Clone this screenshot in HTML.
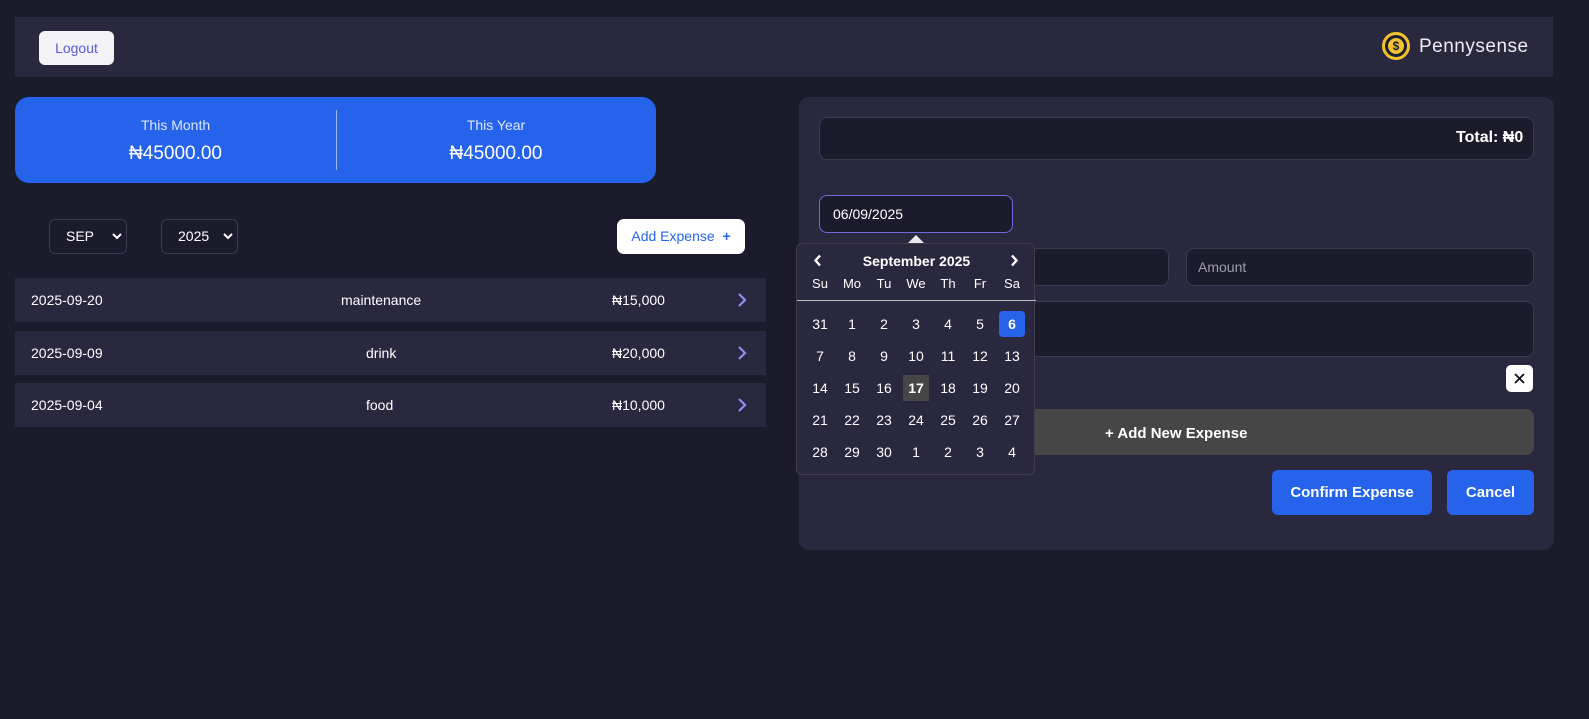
<!DOCTYPE html>
<html><head><meta charset="utf-8"><style>
*{box-sizing:border-box;margin:0;padding:0}
body{width:1589px;height:719px;background:#1c1b2c;font-family:"Liberation Sans",sans-serif;color:#fff;position:relative;overflow:hidden}
.a{position:absolute}
.hdr{left:15px;top:17px;width:1538px;height:60px;background:#2a283e}
.logout{left:39px;top:31px;width:75px;height:34px;background:#f3f3f6;border-radius:6px;color:#5b57d6;font-size:14px;text-align:center;line-height:34px}
.card{left:15px;top:97px;width:641px;height:86px;background:#2563eb;border-radius:14px}
.sel{height:35px;border:1px solid #3b3a50;border-radius:6px;font-size:14px;line-height:33px;padding-left:16px}
.row{left:15px;width:751px;height:44px;background:#2a283e;font-size:14px}
.row span{position:absolute;top:14px}
.row svg{position:absolute;left:722px;top:14px}
.panel{left:799px;top:97px;width:755px;height:453px;background:#2a283e;border-radius:10px}
.inp{background:#1c1b2c;border:1px solid #3b3a50;border-radius:8px}
.cal{left:796px;top:243px;width:239px;height:232px;background:#2a283e;border:1px solid #3f3e4a;border-radius:6px;font-size:14px}
.cal .d{position:absolute;width:26px;height:26px;text-align:center;line-height:26px;font-size:14px}
.btn{background:#2563eb;border-radius:6px;font-size:15px;font-weight:bold;text-align:center;line-height:45px}
</style></head><body>
<div class="a hdr"></div>
<div class="a logout">Logout</div>
<div class="a" style="left:1382px;top:32px;width:28px;height:28px;border-radius:50%;border:3px solid #f2c230;background:#1f1e2e"></div>
<div class="a" style="left:1388px;top:38px;width:16px;height:16px;border-radius:50%;background:#f2c230;color:#1f1e2e;font-size:12px;font-weight:bold;text-align:center;line-height:16px">$</div>
<div class="a" style="left:1419px;top:36px;font-size:19px;color:#ececf2;letter-spacing:.5px">Pennysense</div>

<div class="a card"></div>
<div class="a" style="left:336px;top:110px;width:1px;height:60px;background:#9bb6f5"></div>
<div class="a" style="left:15px;top:117px;width:321px;text-align:center;font-size:14px;color:#dde6fd">This Month</div>
<div class="a" style="left:15px;top:143px;width:321px;text-align:center;font-size:19px">₦45000.00</div>
<div class="a" style="left:336px;top:117px;width:320px;text-align:center;font-size:14px;color:#dde6fd">This Year</div>
<div class="a" style="left:336px;top:143px;width:320px;text-align:center;font-size:19px">₦45000.00</div>

<div class="a sel" style="left:49px;top:219px;width:78px">SEP</div>
<svg class="a" style="left:112px;top:233px" width="10" height="7" viewBox="0 0 10 7"><path d="M1 1l4 4 4-4" stroke="#fff" stroke-width="2" fill="none"/></svg>
<div class="a sel" style="left:161px;top:219px;width:77px">2025</div>
<svg class="a" style="left:223px;top:233px" width="10" height="7" viewBox="0 0 10 7"><path d="M1 1l4 4 4-4" stroke="#fff" stroke-width="2" fill="none"/></svg>
<div class="a" style="left:617px;top:219px;width:128px;height:35px;background:#fff;border-radius:7px;color:#2563eb;font-size:14px;line-height:35px;text-align:center">Add Expense&nbsp; <b>+</b></div>

<div class="a row" style="top:278px"><span style="left:16px">2025-09-20</span><span style="left:326px">maintenance</span><span style="left:597px">₦15,000</span><svg width="10" height="16" viewBox="0 0 10 16"><path d="M2 2l6 6-6 6" stroke="#8f8df0" stroke-width="2.2" fill="none"/></svg></div>
<div class="a row" style="top:331px"><span style="left:16px">2025-09-09</span><span style="left:351px">drink</span><span style="left:597px">₦20,000</span><svg width="10" height="16" viewBox="0 0 10 16"><path d="M2 2l6 6-6 6" stroke="#8f8df0" stroke-width="2.2" fill="none"/></svg></div>
<div class="a row" style="top:383px"><span style="left:16px">2025-09-04</span><span style="left:351px">food</span><span style="left:597px">₦10,000</span><svg width="10" height="16" viewBox="0 0 10 16"><path d="M2 2l6 6-6 6" stroke="#8f8df0" stroke-width="2.2" fill="none"/></svg></div>

<div class="a panel"></div>
<div class="a inp" style="left:819px;top:117px;width:715px;height:43px"></div>
<div class="a" style="left:1456px;top:129px;font-size:16px;font-weight:bold">Total: ₦0</div>
<div class="a inp" style="left:819px;top:195px;width:194px;height:38px;border:1.5px solid #7069dc;font-size:14px;padding:10px 0 0 13px">06/09/2025</div>
<div class="a inp" style="left:1030px;top:248px;width:139px;height:38px"></div>
<div class="a inp" style="left:1186px;top:248px;width:348px;height:38px;color:#9d9cae;font-size:14px;padding:10px 0 0 11px">Amount</div>
<div class="a inp" style="left:1030px;top:301px;width:504px;height:56px"></div>
<div class="a" style="left:1506px;top:365px;width:27px;height:27px;background:#fff;border-radius:5px"></div>
<svg class="a" style="left:1514px;top:373px" width="11" height="11" viewBox="0 0 11 11"><path d="M1 1l9 9M10 1l-9 9" stroke="#111" stroke-width="1.8"/></svg>
<div class="a" style="left:1030px;top:409px;width:504px;height:46px;background:#474646;border-radius:0 8px 8px 0"></div>
<div class="a" style="left:1105px;top:425px;font-size:15px;font-weight:bold">+ Add New Expense</div>
<div class="a btn" style="left:1272px;top:470px;width:160px;height:45px">Confirm Expense</div>
<div class="a btn" style="left:1447px;top:470px;width:87px;height:45px">Cancel</div>

<div class="a" style="left:908px;top:235px;width:0;height:0;border-left:8px solid transparent;border-right:8px solid transparent;border-bottom:8px solid #e8e8ee"></div>
<div class="a cal">
<svg class="a" style="left:16px;top:10px" width="9" height="13" viewBox="0 0 9 13"><path d="M7 1.5L2.5 6.5 7 11.5" stroke="#fff" stroke-width="2.4" fill="none"/></svg>
<div class="a" style="left:0;top:9px;width:239px;text-align:center;font-weight:bold">September 2025</div>
<svg class="a" style="left:213px;top:10px" width="9" height="13" viewBox="0 0 9 13"><path d="M2 1.5L6.5 6.5 2 11.5" stroke="#fff" stroke-width="2.4" fill="none"/></svg>
<div class="a" style="left:0;top:56px;width:239px;height:1px;background:#bdbdc4"></div>
<div id="g"></div>
</div>
<script>
var g=document.getElementById('g'),h='';
var n=['Su','Mo','Tu','We','Th','Fr','Sa'];
for(var i=0;i<7;i++)h+='<div class="d" style="left:'+(10+32*i)+'px;top:27px;font-size:13px">'+n[i]+'</div>';
var days=[31];for(var d=1;d<=30;d++)days.push(d);days.push(1,2,3,4);
for(var k=0;k<35;k++){var c=k%7,r=Math.floor(k/7),st='';
if(k==6)st='background:#2563eb;border-radius:4px;font-weight:bold;';
if(k==17)st='background:#474646;font-weight:bold;';
h+='<div class="d" style="left:'+(10+32*c)+'px;top:'+(67+32*r)+'px;'+st+'">'+days[k]+'</div>';}
g.innerHTML=h;
</script>
</body></html>
